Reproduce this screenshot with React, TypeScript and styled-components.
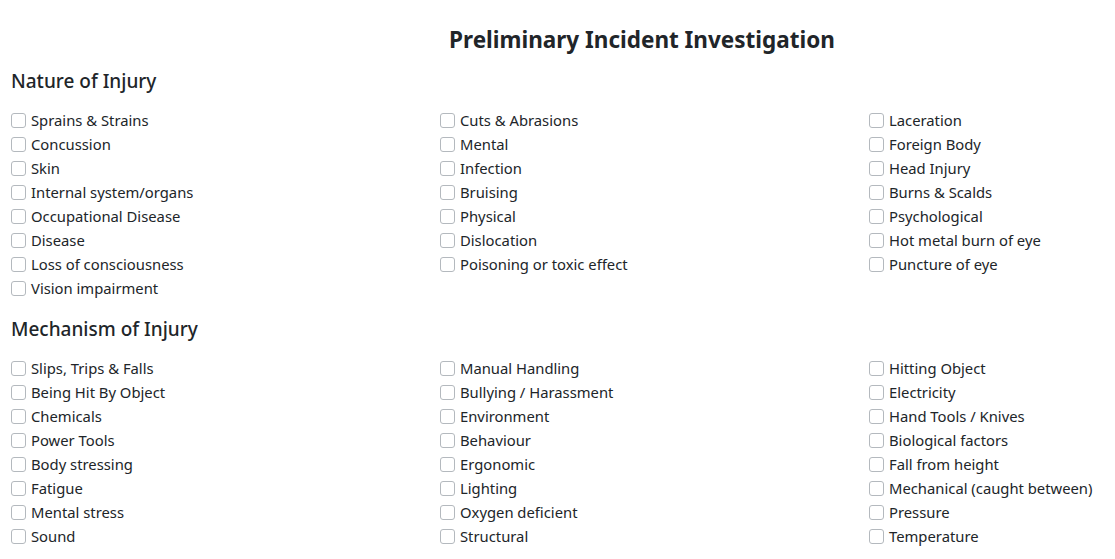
import React from "react";
import styled, { createGlobalStyle } from "styled-components";

const Global = createGlobalStyle`
  html, body { margin: 0; padding: 0; overflow: hidden; background: #fff; }
  body { font-family: "Noto Sans", "Open Sans", sans-serif; color: #212529; }
`;

const Page = styled.div`
  width: 1262px;
  padding: 25px 11px 0 11px;
`;

const Title = styled.h1`
  margin: 0;
  text-align: center;
  font-size: 22.5px;
  font-weight: 700;
  line-height: 30px;
  color: #212529;
`;

const Section = styled.section<{ $first?: boolean }>`
  margin-top: ${(p) => (p.$first ? "12px" : "15px")};
`;

const Heading = styled.h2`
  margin: 0 0 13px 0;
  font-size: 19px;
  font-weight: 500;
  line-height: 28px;
  color: #212529;
`;

const Grid = styled.div`
  display: grid;
  grid-template-columns: repeat(3, 404px);
  column-gap: 25px;
`;

const Column = styled.div`
  display: flex;
  flex-direction: column;
`;

const Row = styled.label`
  display: flex;
  align-items: center;
  height: 24px;
  font-size: 14.8px;
  color: #212529;
  white-space: nowrap;
`;

const Box = styled.input.attrs({ type: "checkbox" })`
  appearance: none;
  -webkit-appearance: none;
  margin: 0 5px 0 0;
  width: 15px;
  height: 15px;
  border: 1px solid #b4b9be;
  border-radius: 3px;
  background: #fff;
  flex: none;
`;

const nature = [
  ["Sprains & Strains", "Concussion", "Skin", "Internal system/organs", "Occupational Disease", "Disease", "Loss of consciousness", "Vision impairment"],
  ["Cuts & Abrasions", "Mental", "Infection", "Bruising", "Physical", "Dislocation", "Poisoning or toxic effect"],
  ["Laceration", "Foreign Body", "Head Injury", "Burns & Scalds", "Psychological", "Hot metal burn of eye", "Puncture of eye"],
];

const mechanism = [
  ["Slips, Trips & Falls", "Being Hit By Object", "Chemicals", "Power Tools", "Body stressing", "Fatigue", "Mental stress", "Sound"],
  ["Manual Handling", "Bullying / Harassment", "Environment", "Behaviour", "Ergonomic", "Lighting", "Oxygen deficient", "Structural"],
  ["Hitting Object", "Electricity", "Hand Tools / Knives", "Biological factors", "Fall from height", "Mechanical (caught between)", "Pressure", "Temperature"],
];

function CheckGroup({ title, cols, first }: { title: string; cols: string[][]; first?: boolean }) {
  return (
    <Section $first={first}>
      <Heading>{title}</Heading>
      <Grid>
        {cols.map((c, i) => (
          <Column key={i}>
            {c.map((t) => (
              <Row key={t}>
                <Box />
                {t}
              </Row>
            ))}
          </Column>
        ))}
      </Grid>
    </Section>
  );
}

export default function App() {
  return (
    <>
      <Global />
      <Page>
        <Title>Preliminary Incident Investigation</Title>
        <CheckGroup title="Nature of Injury" cols={nature} first />
        <CheckGroup title="Mechanism of Injury" cols={mechanism} />
      </Page>
    </>
  );
}
